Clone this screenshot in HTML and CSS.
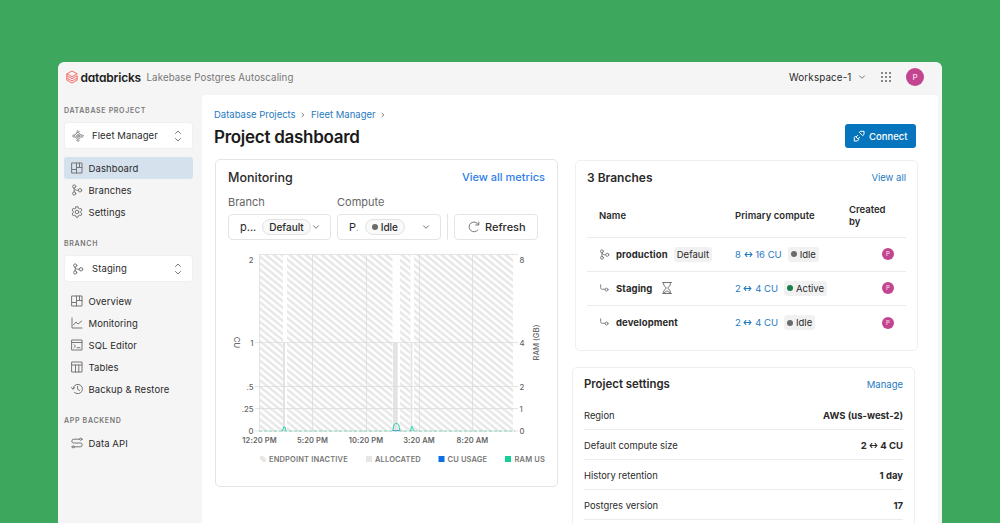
FILE: index.html
```html
<!DOCTYPE html>
<html lang="en">
<head>
  <meta charset="UTF-8">
  <title>Project dashboard</title>
  <link rel="stylesheet" href="styles.css">
</head>

<body>
  <!-- Icons -->
  <svg class="sprite">
    <symbol id="i-dashboard" viewBox="0 0 12 12"><path d="M1 1h10v10H1zM5.5 1v10M1 7.5h4.5M5.5 5.5H11M8.5 1v4.5"/></symbol>
    <symbol id="i-branch" viewBox="0 0 12 12"><circle cx="3.2" cy="2.5" r="1.6"/><circle cx="3.2" cy="9.5" r="1.6"/><circle cx="9" cy="6.3" r="1.7"/><path d="M3.2 4.2v3.600M3.2 4.500c.3 1.300 1.600 1.800 4 1.800"/></symbol>
    <symbol id="i-gear" viewBox="0 0 12 12"><path d="M5 .8h2l.4 1.500 1 .5 1.500-.5 1 1.700-1.100 1.200v1.600l1.100 1.200-1 1.700-1.500-.5-1 .5L7 11.200H5l-.4-1.500-1-.5-1.500.5-1-1.700 1.100-1.200V5.200L1.100 4l1-1.700 1.500.5 1-.5z"/><circle cx="6" cy="6" r="1.800"/></symbol>
    <symbol id="i-chart" viewBox="0 0 12 12"><path d="M1 1v10h10M2.500 8l2.500-3 2 2 3.800-3"/></symbol>
    <symbol id="i-sql" viewBox="0 0 12 12"><path d="M1 1h10v10H1zM1 3.500h10M3 5.800l1.500 1.300L3 8.500M6 8.700h3"/></symbol>
    <symbol id="i-table" viewBox="0 0 12 12"><path d="M1 1h10v10H1zM1 4h10M4.500 4v7M7.800 4v7"/></symbol>
    <symbol id="i-history" viewBox="0 0 12 12"><path d="M2 6a4.700 4.700 0 1 1 1.400 3.400M.3 4.500L2 6.200l1.800-1.700M6.600 3.300v3l2 1.200"/></symbol>
    <symbol id="i-api" viewBox="0 0 12 12"><path d="M8.600 2.200H2.700a1.900 1.900 0 0 0 0 3.800h6.600a1.900 1.900 0 0 1 0 3.800H3.400M.8 9.800h.4M10.800 2.200h.4"/><circle cx="9.700" cy="2.200" r="1.100"/><circle cx="2.300" cy="9.800" r="1.100"/></symbol>
    <symbol id="i-project" viewBox="0 0 12 12"><path d="M6 2.300L9.700 6 6 9.700 2.300 6zM4.600 1.900L6 .5l1.400 1.400M4.600 10.100L6 11.500l1.400-1.400M1.900 4.600L.5 6l1.400 1.400M10.100 4.600L11.500 6l-1.400 1.400"/><circle cx="6" cy="6" r="1.300"/></symbol>
    <symbol id="i-sort" viewBox="0 0 8 12"><path d="M1.500 3.500L4 1l2.500 2.500M1.500 8.500L4 11l2.500-2.500"/></symbol>
    <symbol id="i-down" viewBox="0 0 8 8"><path d="M1.500 2.800L4 5.300l2.500-2.500"/></symbol>
    <symbol id="i-right" viewBox="0 0 8 8"><path d="M3 2.300L4.800 4 3 5.700"/></symbol>
    <symbol id="i-child" viewBox="0 0 12 12"><path d="M1.800 2v3c0 1.300.5 1.800 1.700 1.800h3.200"/><circle cx="8.300" cy="7.200" r="1.600"/></symbol>
    <symbol id="i-hourglass" viewBox="0 0 12 14"><path d="M1.500 1.500h9M1.500 12.500h9M2.700 1.500V4l2.600 3-2.600 3v2.500M9.300 1.500V4L6.700 7l2.600 3v2.500M3 12L6 9.800 9 12"/></symbol>
    <symbol id="i-refresh" viewBox="0 0 12 12"><path d="M10.300 3.500A4.900 4.900 0 1 0 10 8.800M10.800 1v3H7.700"/></symbol>
    <symbol id="i-plug" viewBox="0 0 12 12"><path d="M1.300 10.700V7.300l1-1 3.400 3.400-1 1zM3.300 6.800l1.500-1.500M5.200 8.700l1.500-1.500M10.700 1.300H7.300l-1 1 3.400 3.400 1-1z"/></symbol>
    <symbol id="i-swap" viewBox="0 0 10 8"><path d="M1 4h8M3.200 1.700L1 4l2.200 2.300M6.800 1.700L9 4 6.800 6.300"/></symbol>
  </svg>

  <div class="window">
    <header class="topbar">
      <svg class="brand-mark" viewBox="0 0 12 14"><path d="M.8 3.800L6 1l5.200 2.800L6 6.700zM.8 3.800v2L6 8.700l5.200-2.900M.8 5.800v2.400L6 11l5.200-2.800V5.800M.8 8.200v2L6 13.100l5.200-2.900v-2"/></svg>
      <span class="brand">databricks</span>
      <span class="product">Lakebase Postgres Autoscaling</span>
      <span class="workspace">Workspace-1</span>
      <svg class="icon chevron"><use href="#i-down"/></svg>
      <span class="apps"><i></i><i></i><i></i><i></i><i></i><i></i><i></i><i></i><i></i></span>
      <span class="avatar">P</span>
    </header>

    <div class="body">
      <!-- Sidebar -->
      <nav class="sidebar">
        <h6>DATABASE PROJECT</h6>
        <div class="picker"><svg class="icon"><use href="#i-project"/></svg><span>Fleet Manager</span><svg class="icon sort"><use href="#i-sort"/></svg></div>
        <ul>
          <li class="active"><svg class="icon"><use href="#i-dashboard"/></svg>Dashboard</li>
          <li><svg class="icon"><use href="#i-branch"/></svg>Branches</li>
          <li><svg class="icon"><use href="#i-gear"/></svg>Settings</li>
        </ul>
        <h6>BRANCH</h6>
        <div class="picker"><svg class="icon"><use href="#i-branch"/></svg><span>Staging</span><svg class="icon sort"><use href="#i-sort"/></svg></div>
        <ul>
          <li><svg class="icon"><use href="#i-dashboard"/></svg>Overview</li>
          <li><svg class="icon"><use href="#i-chart"/></svg>Monitoring</li>
          <li><svg class="icon"><use href="#i-sql"/></svg>SQL Editor</li>
          <li><svg class="icon"><use href="#i-table"/></svg>Tables</li>
          <li><svg class="icon"><use href="#i-history"/></svg>Backup &amp; Restore</li>
        </ul>
        <h6>APP BACKEND</h6>
        <ul class="last">
          <li><svg class="icon"><use href="#i-api"/></svg>Data API</li>
        </ul>
      </nav>

      <!-- Main Content -->
      <main class="main">
        <div class="page-head">
          <div>
            <div class="crumbs">
              <a>Database Projects</a><svg class="icon"><use href="#i-right"/></svg>
              <a>Fleet Manager</a><svg class="icon"><use href="#i-right"/></svg>
            </div>
            <h1>Project dashboard</h1>
          </div>
          <button class="connect"><svg class="icon"><use href="#i-plug"/></svg>Connect</button>
        </div>

        <div class="columns">
          <section class="card monitoring">
            <div class="card-head"><h2>Monitoring</h2><a>View all metrics</a></div>
            <div class="filters">
              <div class="filter branch">
                <label>Branch</label>
                <div class="select"><span>p...</span><span class="pill">Default</span><svg class="icon chevron"><use href="#i-down"/></svg></div>
              </div>
              <div class="filter compute">
                <label>Compute</label>
                <div class="select"><span>P<small>.</small></span><span class="pill"><i class="dot"></i>Idle</span><svg class="icon chevron"><use href="#i-down"/></svg></div>
              </div>
              <div class="divider"></div>
              <div class="select refresh"><svg class="icon"><use href="#i-refresh"/></svg>Refresh</div>
            </div>

            <svg class="chart" width="340" height="226" viewBox="216 245 340 226">
              <defs>
                <pattern id="hatch" width="8" height="6.5" patternUnits="userSpaceOnUse">
                  <path d="M-8 -6.5L16 13M-8 0L8 13M0 -6.5L16 6.5" stroke="#e8e8e8" stroke-width="2.6"/>
                </pattern>
              </defs>
              <path fill="url(#hatch)" d="M260 255h23v177h-23zM287 255h105.500v177H287zM400 255h10.500v177H400zM414 255h99v177h-99z"/>
              <path class="allocated" d="M283 343h2v88h-2zM393 343h4.700v88H393zM410.700 343h1.600v88h-1.600z"/>
              <path class="grid" d="M259.500 255v177M312.500 255v177M366.500 255v177M419.500 255v177M472.500 255v177M259 254.500h259M255 342.500h263M255 386.500h263M255 408.500h263M255 431h263"/>
              <path class="usage" d="M392.500 430.500h7"/>
              <path class="ram-base" d="M259 431h256"/>
              <path class="ram" d="M282.500 431l1-4h1.600l1 4M392.800 431l1-6 1.500-1.500h2l1.500 1.500 1 6M410.500 431l1-4.500h1l1 4.500"/>
              <g class="ticks" text-anchor="end">
                <text x="253.500" y="262.500">2</text>
                <text x="253.500" y="345.500">1</text>
                <text x="253.500" y="389.500">.5</text>
                <text x="253.500" y="411.500">.25</text>
                <text x="253.500" y="434">0</text>
              </g>
              <g class="ticks">
                <text x="519.500" y="262.500">8</text>
                <text x="519.500" y="345.500">4</text>
                <text x="519.500" y="389.500">2</text>
                <text x="519.500" y="411.500">1</text>
                <text x="519.500" y="434">0</text>
              </g>
              <g class="times" text-anchor="middle">
                <text x="259.500" y="442.500">12:20 PM</text>
                <text x="312.500" y="442.500">5:20 PM</text>
                <text x="366" y="442.500">10:20 PM</text>
                <text x="419" y="442.500">3:20 AM</text>
                <text x="472.500" y="442.500">8:20 AM</text>
              </g>
              <text class="axis" text-anchor="middle" transform="translate(233.500 342.500) rotate(90)">CU</text>
              <text class="axis" text-anchor="middle" transform="translate(539 342.500) rotate(-90)">RAM (GB)</text>
              <g class="legend">
                <path fill="#e6e6e6" d="M260 456h3l3 3v3h-3l-3-3z"/><text x="269" y="461.500">ENDPOINT INACTIVE</text>
                <path fill="#e6e6e6" d="M366 456h6v6h-6z"/><text x="375" y="461.500">ALLOCATED</text>
                <path fill="#0b6fe8" d="M438.500 456h6v6h-6z"/><text x="447.500" y="461.500">CU USAGE</text>
                <path fill="#15cf9a" d="M505 456h6v6h-6z"/><text x="514.500" y="461.500">RAM US</text>
              </g>
            </svg>
          </section>

          <div class="right">
            <section class="card branches">
              <div class="card-head"><h2>3 Branches</h2><a>View all</a></div>
              <div class="row head"><span class="name">Name</span><span class="size">Primary compute</span><span class="by">Created<br>by</span></div>
              <div class="row">
                <span class="name"><svg class="icon"><use href="#i-branch"/></svg>production<em class="tag">Default</em></span>
                <span class="size"><a>8 <svg class="icon swap"><use href="#i-swap"/></svg> 16 CU</a><em class="tag"><i class="dot"></i>Idle</em></span>
                <span class="by"><b class="avatar small">P</b></span>
              </div>
              <div class="row">
                <span class="name"><svg class="icon"><use href="#i-child"/></svg>Staging<svg class="icon hourglass"><use href="#i-hourglass"/></svg></span>
                <span class="size"><a>2 <svg class="icon swap"><use href="#i-swap"/></svg> 4 CU</a><em class="tag"><i class="dot green"></i>Active</em></span>
                <span class="by"><b class="avatar small">P</b></span>
              </div>
              <div class="row">
                <span class="name"><svg class="icon"><use href="#i-child"/></svg>development</span>
                <span class="size"><a>2 <svg class="icon swap"><use href="#i-swap"/></svg> 4 CU</a><em class="tag"><i class="dot"></i>Idle</em></span>
                <span class="by"><b class="avatar small">P</b></span>
              </div>
            </section>

            <section class="card settings">
              <div class="card-head"><h2>Project settings</h2><a>Manage</a></div>
              <div class="setting"><span>Region</span><b>AWS (us-west-2)</b></div>
              <div class="setting"><span>Default compute size</span><b>2 <svg class="icon swap"><use href="#i-swap"/></svg> 4 CU</b></div>
              <div class="setting"><span>History retention</span><b>1 day</b></div>
              <div class="setting"><span>Postgres version</span><b>17</b></div>
            </section>
          </div>
        </div>
      </main>
    </div>
  </div>
</body>
</html>
```
FILE: styles.css
```css
* {
  box-sizing: border-box;
}

body {
  margin: 0;
  height: 523px;
  padding: 62px 58px 0;
  overflow: hidden;
  background: #3da75e;
  font-family: Inter, "Liberation Sans", sans-serif;
  font-size: 9.5px;
  color: #2a2a2a;
}

h1, h2, h6, ul {
  margin: 0;
  padding: 0;
}

a {
  color: #1f7abf;
}

em, i {
  font-style: normal;
}

.sprite {
  display: none;
}

.icon {
  width: 12px;
  height: 12px;
  flex: none;
  fill: none;
  stroke: #777;
  stroke-width: 1;
  stroke-linecap: round;
  stroke-linejoin: round;
}

.icon.chevron {
  width: 8px;
  height: 8px;
}

.icon.swap {
  width: 9px;
  height: 7px;
  stroke: currentColor;
  stroke-width: 1.2;
}

.window {
  height: 461px;
  background: #f5f5f5;
  border-radius: 6px 6px 0 0;
  display: flex;
  flex-direction: column;
  overflow: hidden;
}

/* Top bar */
.topbar {
  height: 33px;
  flex: none;
  display: flex;
  align-items: center;
  padding: 0 18px 3px 8px;
}

.brand-mark {
  width: 12px;
  height: 14px;
  fill: none;
  stroke: #f0605a;
  stroke-width: 0.9;
}

.brand {
  width: 63px;
  margin-left: 2.5px;
  font-size: 12px;
  font-weight: 600;
  letter-spacing: -0.2px;
  font-feature-settings: "cv11";
  color: #1c1c1c;
}

.product {
  margin-left: 3px;
  font-size: 9.7px;
  letter-spacing: 0.12px;
  color: #777;
}

.workspace {
  margin-left: auto;
  margin-right: 6px;
  font-size: 9.8px;
  letter-spacing: 0.15px;
}

.apps {
  display: grid;
  grid-template-columns: repeat(3, 2.5px);
  gap: 1.5px;
  margin: 0 15px 0 15px;
}

.apps i {
  height: 2.5px;
  background: #606060;
  border-radius: 1px;
}

.avatar {
  width: 18px;
  height: 18px;
  border-radius: 50%;
  background: #c3458f;
  color: #f8dced;
  font-size: 8px;
  font-weight: 500;
  line-height: 18px;
  text-align: center;
}

.avatar.small {
  display: block;
  width: 12px;
  height: 12px;
  font-size: 6px;
  line-height: 12px;
}

.body {
  flex: 1;
  display: flex;
  min-height: 0;
}

/* Sidebar */
.sidebar {
  width: 144px;
  flex: none;
  padding: 11px 9px 0 6px;
}

.sidebar h6 {
  font-size: 7px;
  line-height: 10px;
  font-weight: 600;
  letter-spacing: 0.68px;
  color: #777;
}

.picker {
  display: flex;
  align-items: center;
  height: 27px;
  margin: 6px 0 8px;
  padding: 0 10px 0 7px;
  border: 1px solid #f0f0f0;
  border-radius: 3px;
  background: #fff;
  letter-spacing: 0.1px;
}

.picker span {
  flex: 1;
  margin-left: 8px;
}

.icon.sort {
  width: 8px;
}

.sidebar ul {
  list-style: none;
  margin-bottom: 16px;
}

.sidebar ul.last {
  margin-top: 6px;
}

.sidebar li {
  display: flex;
  align-items: center;
  gap: 5.5px;
  height: 22px;
  padding-left: 7px;
  border-radius: 3px;
  letter-spacing: 0.1px;
}

.sidebar li.active {
  background: #d5e1ed;
}

/* Main Content */
.main {
  width: 736px;
  padding: 13px 0 0 12px;
  background: #fff;
  border-radius: 4px 4px 0 0;
}

.page-head {
  display: flex;
  justify-content: space-between;
  height: 52px;
  padding-right: 22px;
}

.crumbs {
  display: flex;
  align-items: center;
  gap: 3.7px;
  height: 13px;
}

.crumbs .icon {
  width: 8px;
  height: 8px;
}

h1 {
  margin-top: 5px;
  font-size: 17px;
  line-height: 22px;
  font-weight: 600;
  letter-spacing: -0.28px;
  color: #1a1a1a;
}

.connect {
  display: flex;
  align-items: center;
  gap: 4px;
  height: 24px;
  width: 71px;
  margin-top: 16px;
  padding: 0 8px;
  border: 0;
  border-radius: 3px;
  background: #0675bd;
  color: #fff;
  font: 500 9.5px Inter, sans-serif;
}

.connect .icon {
  stroke: #fff;
}

.columns {
  display: flex;
}

.card {
  border: 1px solid #e4e4e4;
  border-radius: 5px;
}

.card-head {
  display: flex;
  align-items: center;
  justify-content: space-between;
}

.card h2 {
  font-size: 12px;
  font-weight: 600;
}

/* Monitoring */
.monitoring {
  width: 343px;
  height: 328px;
  margin: -1px 0 0 1px;
}

.monitoring .card-head {
  height: 34px;
  padding: 0 12px;
}

.monitoring h2 {
  font-size: 12.5px;
  font-weight: 500;
}

.monitoring .card-head a {
  font-size: 11px;
  font-weight: 500;
  color: #2f80ed;
}

.filters {
  display: flex;
  align-items: flex-end;
  height: 46px;
  margin-left: 12px;
}

.filter label {
  display: block;
  height: 19px;
  font-size: 11px;
  line-height: 14px;
  color: #666;
}

.filter.branch {
  width: 103px;
  margin-right: 6px;
}

.filter.compute {
  width: 104px;
}

.select {
  display: flex;
  align-items: center;
  height: 26px;
  padding: 0 10px 0 11px;
  border: 1px solid #e4e4e4;
  border-radius: 4px;
  font-size: 11px;
}

.select .chevron {
  margin-left: auto;
}

.select small {
  color: #aaa;
}

.pill {
  display: flex;
  align-items: center;
  height: 16px;
  margin-left: 6px;
  padding: 0 6px;
  border: 1px solid #e2e2e2;
  border-radius: 8px;
  background: #f9f9f9;
  font-size: 10px;
  font-weight: 500;
}

.dot {
  display: inline-block;
  width: 6px;
  height: 6px;
  margin-right: 3px;
  border-radius: 50%;
  background: #6a6a6a;
}

.dot.green {
  background: #15804d;
}

.divider {
  width: 1px;
  height: 26px;
  margin: 0 6px;
  background: #e4e4e4;
}

.select.refresh {
  width: 84px;
  gap: 5px;
  padding-left: 13px;
  font-weight: 500;
}

.chart {
  display: block;
  margin-top: 5px;
}

.grid {
  fill: none;
  stroke: #dcdcdc;
  stroke-width: 0.8;
}

.allocated {
  fill: #e3e3e3;
}

.usage, .ram, .ram-base {
  fill: none;
  stroke: #2fcfaf;
}

.usage {
  stroke: #3a8ee8;
}

.ram-base {
  stroke: #86d9b8;
  stroke-dasharray: 3 2;
}

.chart text {
  font-size: 7.7px;
  font-weight: 500;
  fill: #666;
}

.chart .times text {
  font-size: 7.5px;
  font-weight: 600;
  letter-spacing: 0.1px;
}

.chart .legend text {
  font-size: 7.5px;
  font-weight: 600;
  letter-spacing: 0.15px;
  fill: #777;
}

/* Branches */
.right {
  margin-left: 14px;
}

.branches {
  width: 343px;
  height: 191px;
  margin: 0 0 0 3px;
  padding: 0 11px;
  border-color: #efefef;
}

.branches .card-head {
  height: 33px;
  margin-bottom: 1px;
}

.row {
  display: flex;
  align-items: center;
  height: 34px;
  padding: 0 0 1px 12px;
  border-bottom: 1px solid #ebebeb;
}

.row:last-child {
  border-bottom: 0;
}

.row.head {
  height: 43px;
  font-weight: 600;
}

.row span {
  display: flex;
  align-items: center;
}

.row .name {
  width: 136px;
  font-weight: 700;
}

.row.head .name {
  font-weight: 600;
}

.row.head .size {
  letter-spacing: 0.05px;
}

.row .name .icon {
  width: 11px;
  height: 11px;
  margin-right: 6px;
}

.row .size {
  width: 114px;
}

.row .by {
  flex: 1;
  line-height: 12px;
}

.row .by .avatar {
  margin-left: 33px;
}

.row .name {
  letter-spacing: 0.1px;
}

.tag {
  display: flex;
  align-items: center;
  height: 15px;
  margin-left: 6px;
  padding: 0 3px;
  border-radius: 3px;
  background: #f1f1f1;
  font-weight: 400;
  letter-spacing: 0;
}

.row .name .icon.hourglass {
  width: 12px;
  height: 14px;
  margin-left: 9px;
}

/* Project settings */
.settings {
  width: 343px;
  height: 170px;
  margin-top: 16px;
  padding: 0 11px;
  border-color: #efefef;
}

.settings .card-head {
  height: 32px;
}

.settings h2 {
  font-size: 11.4px;
}

.setting {
  display: flex;
  align-items: center;
  justify-content: space-between;
  height: 30px;
  padding-top: 1px;
  border-bottom: 1px solid #ebebeb;
}

.setting span {
  font-size: 9.4px;
}

.setting b {
  font-weight: 700;
}
```
